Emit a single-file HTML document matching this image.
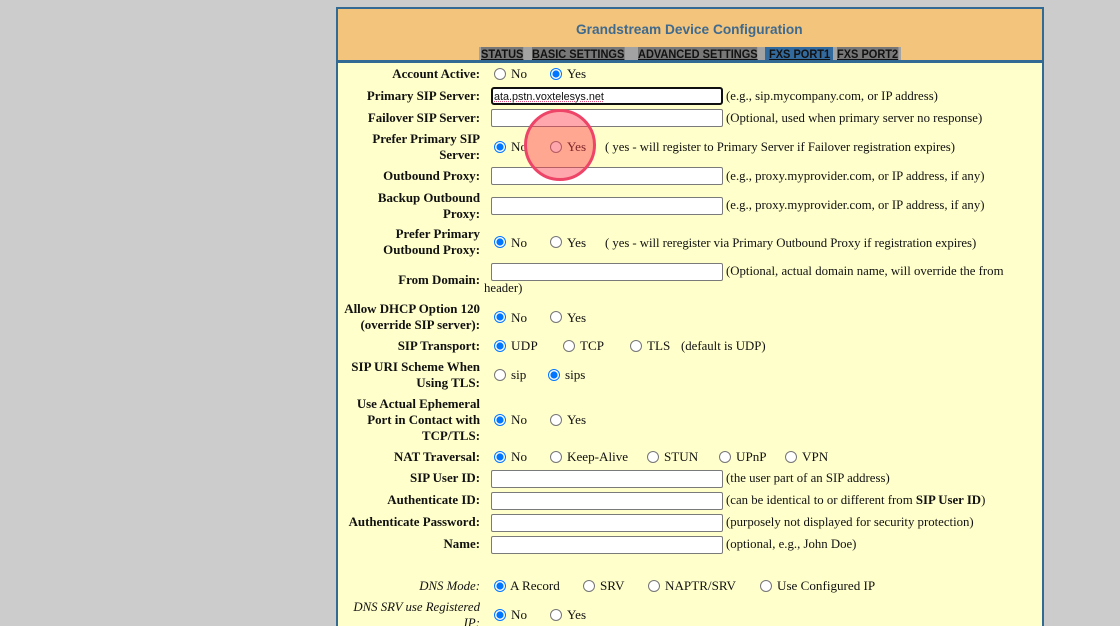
<!DOCTYPE html>
<html><head><meta charset="utf-8"><style>
html,body{margin:0;padding:0;width:1120px;height:626px;overflow:hidden;background:#ccc}
#w{position:absolute;left:0;top:0;width:1120px;height:626px;overflow:hidden;background:#ccc;filter:blur(.3px)}
#box{position:absolute;left:336px;top:7px;width:704px;height:640px;border:2px solid #336a94;background:#ffc}
#head{position:absolute;left:338px;top:9px;width:704px;height:51px;background:#f3c47c}
#line{position:absolute;left:338px;top:60px;width:704px;height:3px;background:#336a94}
.t,.l{position:absolute;font:12.8px/16px "Liberation Serif",serif;color:#111;white-space:nowrap}
.l{right:640px;text-align:right;font-weight:bold;font-size:12.9px}
.i{font-style:italic;font-weight:normal;font-size:12.8px}
.r{font-size:13.1px}
.y{letter-spacing:-.05px}
.f{position:absolute;left:491px;width:230px;height:16px;border:1px solid #7a7a7a;border-radius:2px;background:#fff}
input{position:absolute;margin:0;width:12px;height:12px;accent-color:#0075ff}
.tab{position:absolute;top:47px;height:13px;font:bold 12px/15px "Liberation Sans",sans-serif;color:#111;text-decoration:underline;white-space:nowrap;transform:scaleX(.917);transform-origin:0 0}
#title{position:absolute;left:576px;top:22px;font:bold 13.7px/16px "Liberation Sans",sans-serif;color:#3f6a8e;white-space:nowrap}
#ring{position:absolute;left:524px;top:109px;width:66px;height:66px;border:3px solid #ee4468;border-radius:50%;background:rgba(255,60,70,.45)}
</style></head><body><div id="w">
<div id="box"></div><div id="head"></div><div id="line"></div>
<div id="title">Grandstream Device Configuration</div>
<div style="position:absolute;left:479px;top:47px;width:422px;height:13px;background:#a3a3a3"></div>
<div style="position:absolute;left:765px;top:47px;width:68px;height:13px;background:#336a9e"></div>
<div class="tab" style="left:481px;background:#777">STATUS</div>
<div class="tab" style="left:532px;background:#777">BASIC SETTINGS</div>
<div class="tab" style="left:638px;background:#777">ADVANCED SETTINGS</div>
<div class="tab" style="left:769px">FXS PORT1</div>
<div class="tab" style="left:837px;background:#777">FXS PORT2</div>

<div class="l" style="top:66px">Account Active:</div>
<input type="radio" style="left:494px;top:68px"><div class="t r" style="left:511px;top:66px">No</div>
<input type="radio" checked style="left:550px;top:68px"><div class="t r" style="left:567px;top:66px">Yes</div>

<div class="l" style="top:88px">Primary SIP Server:</div>
<div style="position:absolute;left:491px;top:87px;width:227px;height:14px;border:2px solid #101010;border-radius:3px;background:#fff;font:10.8px/17px 'Liberation Sans',sans-serif;color:#111;padding-left:1px"><span style="text-decoration:underline dotted #e0507a">ata.pstn.voxtelesys.net</span></div>
<div class="t" style="left:726px;top:88px">(e.g., sip.mycompany.com, or IP address)</div>

<div class="l" style="top:110px">Failover SIP Server:</div>
<div class="f" style="top:109px"></div>
<div class="t" style="left:726px;top:110px">(Optional, used when primary server no response)</div>

<div class="l" style="top:131px">Prefer Primary SIP<br>Server:</div>
<input type="radio" checked style="left:494px;top:141px"><div class="t r" style="left:511px;top:139px">No</div>
<input type="radio" style="left:550px;top:141px"><div class="t r" style="left:567px;top:139px">Yes</div>
<div class="t y" style="left:605px;top:139px">( yes - will register to Primary Server if Failover registration expires)</div>

<div class="l" style="top:168px">Outbound Proxy:</div>
<div class="f" style="top:167px"></div>
<div class="t" style="left:726px;top:168px">(e.g., proxy.myprovider.com, or IP address, if any)</div>

<div class="l" style="top:190px">Backup Outbound<br>Proxy:</div>
<div class="f" style="top:197px"></div>
<div class="t" style="left:726px;top:197px">(e.g., proxy.myprovider.com, or IP address, if any)</div>

<div class="l" style="top:226px">Prefer Primary<br>Outbound Proxy:</div>
<input type="radio" checked style="left:494px;top:236px"><div class="t r" style="left:511px;top:235px">No</div>
<input type="radio" style="left:550px;top:236px"><div class="t r" style="left:567px;top:235px">Yes</div>
<div class="t y" style="left:605px;top:235px">( yes - will reregister via Primary Outbound Proxy if registration expires)</div>

<div class="l" style="top:272px">From Domain:</div>
<div class="f" style="top:263px"></div>
<div class="t" style="left:726px;top:263px">(Optional, actual domain name, will override the from</div>
<div class="t" style="left:484px;top:280px">header)</div>

<div class="l" style="top:301px">Allow DHCP Option 120<br>(override SIP server):</div>
<input type="radio" checked style="left:494px;top:311px"><div class="t r" style="left:511px;top:310px">No</div>
<input type="radio" style="left:550px;top:311px"><div class="t r" style="left:567px;top:310px">Yes</div>

<div class="l" style="top:338px">SIP Transport:</div>
<input type="radio" checked style="left:494px;top:340px"><div class="t r" style="left:511px;top:338px;letter-spacing:.3px">UDP</div>
<input type="radio" style="left:563px;top:340px"><div class="t r" style="left:580px;top:338px">TCP</div>
<input type="radio" style="left:630px;top:340px"><div class="t r" style="left:647px;top:338px">TLS</div>
<div class="t" style="left:681px;top:338px">(default is UDP)</div>

<div class="l" style="top:359px;font-size:13px">SIP URI Scheme When<br>Using TLS:</div>
<input type="radio" style="left:494px;top:369px"><div class="t r" style="left:511px;top:367px">sip</div>
<input type="radio" checked style="left:548px;top:369px"><div class="t r" style="left:565px;top:367px">sips</div>

<div class="l" style="top:396px">Use Actual Ephemeral<br>Port in Contact with<br>TCP/TLS:</div>
<input type="radio" checked style="left:494px;top:414px"><div class="t r" style="left:511px;top:412px">No</div>
<input type="radio" style="left:550px;top:414px"><div class="t r" style="left:567px;top:412px">Yes</div>

<div class="l" style="top:449px">NAT Traversal:</div>
<input type="radio" checked style="left:494px;top:451px"><div class="t r" style="left:511px;top:449px">No</div>
<input type="radio" style="left:550px;top:451px"><div class="t r" style="left:567px;top:449px">Keep-Alive</div>
<input type="radio" style="left:647px;top:451px"><div class="t r" style="left:664px;top:449px">STUN</div>
<input type="radio" style="left:719px;top:451px"><div class="t r" style="left:736px;top:449px">UPnP</div>
<input type="radio" style="left:785px;top:451px"><div class="t r" style="left:802px;top:449px">VPN</div>

<div class="l" style="top:470px">SIP User ID:</div>
<div class="f" style="top:470px"></div>
<div class="t" style="left:726px;top:470px">(the user part of an SIP address)</div>

<div class="l" style="top:492px">Authenticate ID:</div>
<div class="f" style="top:492px"></div>
<div class="t" style="left:726px;top:492px">(can be identical to or different from <b>SIP User ID</b>)</div>

<div class="l" style="top:514px">Authenticate Password:</div>
<div class="f" style="top:514px"></div>
<div class="t" style="left:726px;top:514px">(purposely not displayed for security protection)</div>

<div class="l" style="top:536px">Name:</div>
<div class="f" style="top:536px"></div>
<div class="t" style="left:726px;top:536px">(optional, e.g., John Doe)</div>

<div class="l i" style="top:578px">DNS Mode:</div>
<input type="radio" checked style="left:494px;top:580px"><div class="t r" style="left:510px;top:578px">A Record</div>
<input type="radio" style="left:583px;top:580px"><div class="t r" style="left:600px;top:578px">SRV</div>
<input type="radio" style="left:648px;top:580px"><div class="t r" style="left:665px;top:578px">NAPTR/SRV</div>
<input type="radio" style="left:760px;top:580px"><div class="t r" style="left:777px;top:578px">Use Configured IP</div>

<div class="l i" style="top:599px">DNS SRV use Registered<br>IP:</div>
<input type="radio" checked style="left:494px;top:609px"><div class="t r" style="left:511px;top:607px">No</div>
<input type="radio" style="left:550px;top:609px"><div class="t r" style="left:567px;top:607px">Yes</div>

<div id="ring"></div>
</div></body></html>
